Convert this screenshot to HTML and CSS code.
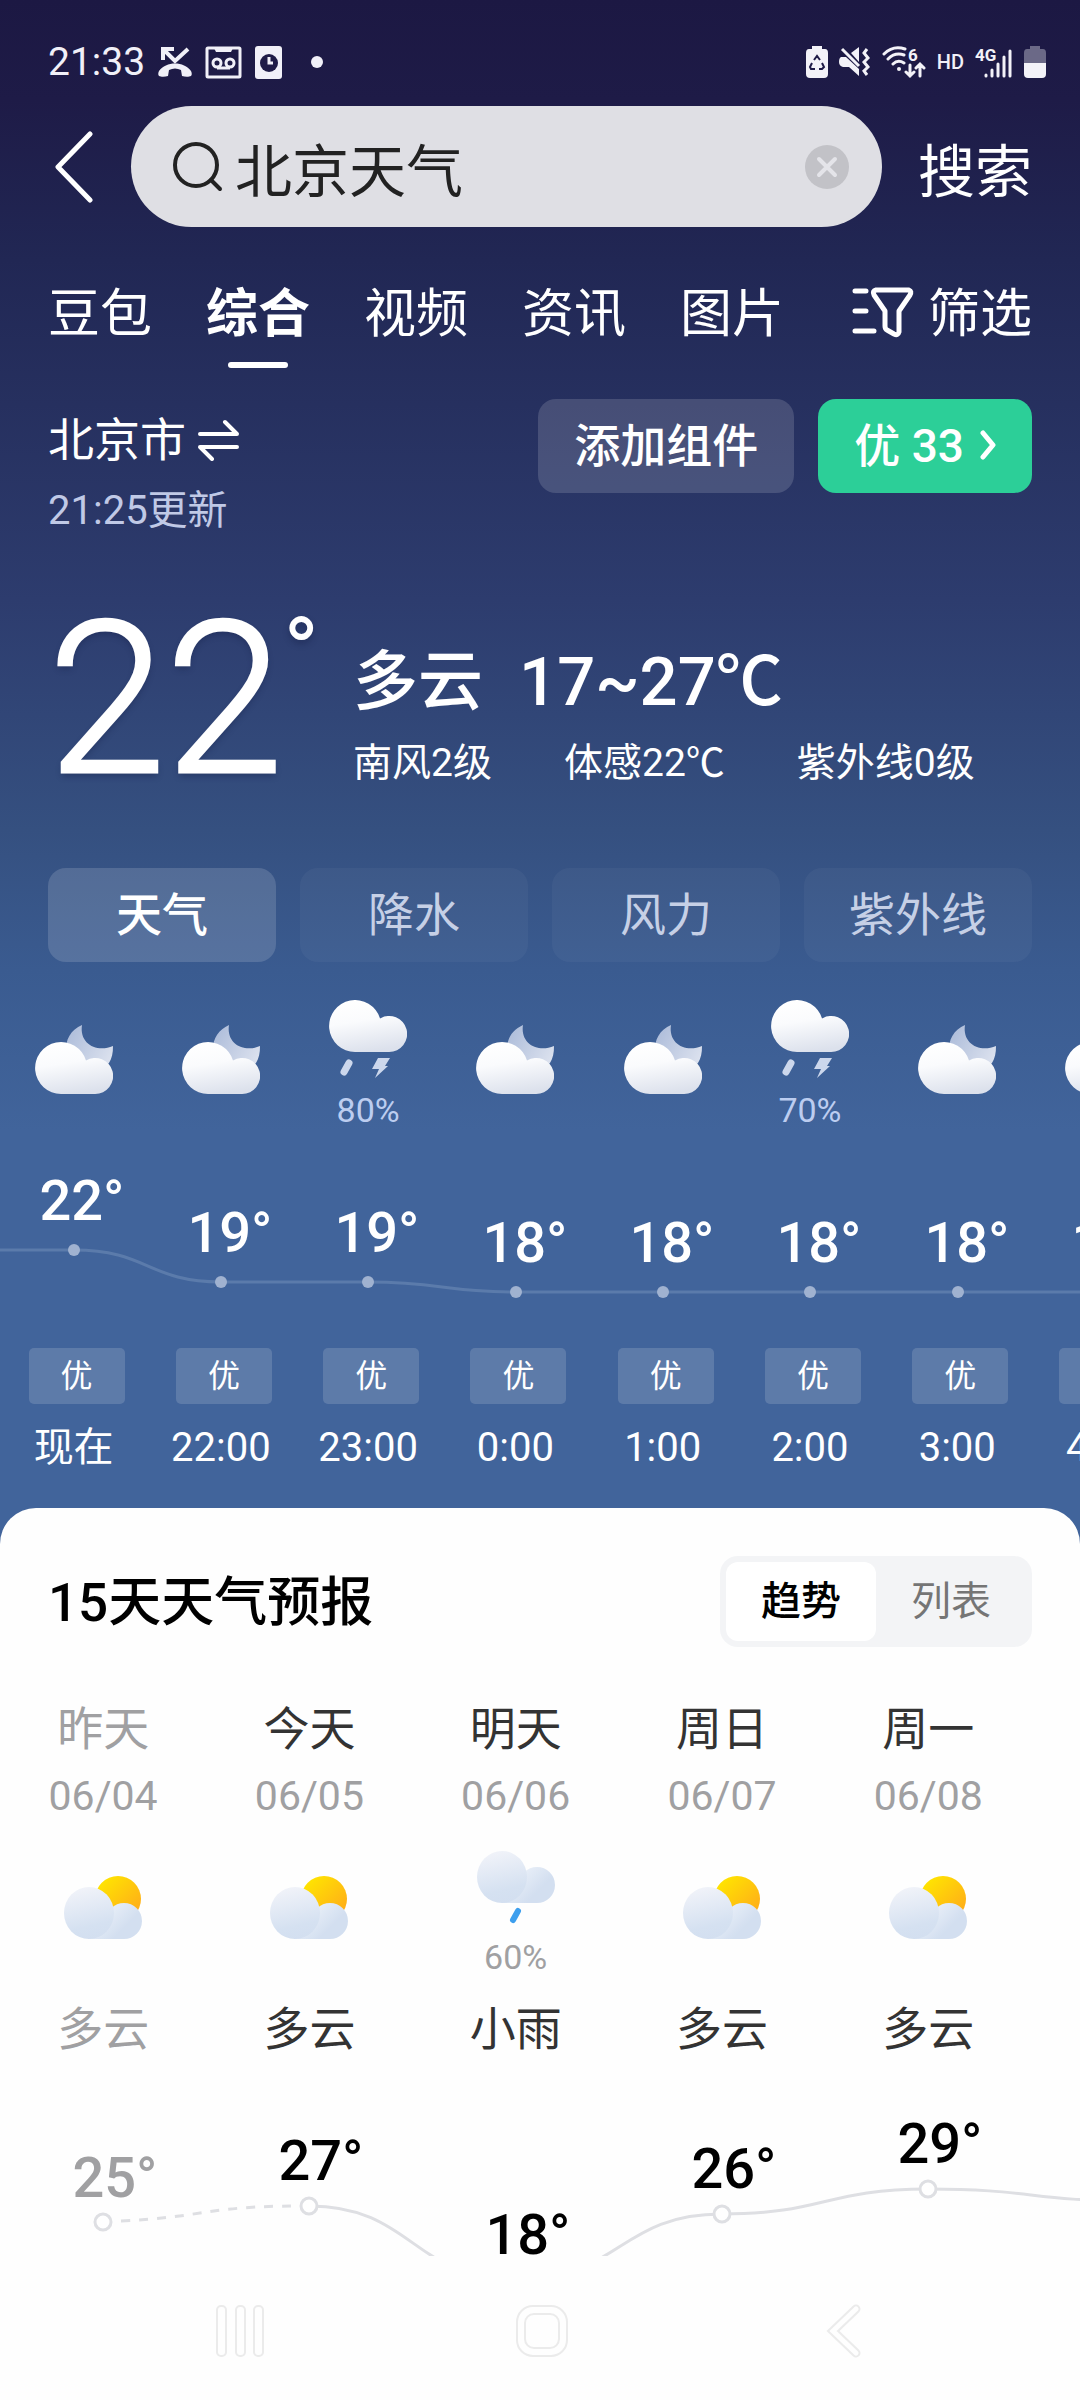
FILE: index.html
```html
<!DOCTYPE html>
<html lang="zh-CN">
<head>
<meta charset="UTF-8">
<meta name="viewport" content="width=device-width, initial-scale=1">
<title>北京天气</title>
<link rel="stylesheet" href="styles.css">
</head>
<body>

<!-- Shared weather icons -->
<svg class="sprite" width="0" height="0" aria-hidden="true">
  <defs>
    <linearGradient id="cloudNight" gradientUnits="userSpaceOnUse" x1="30" y1="17" x2="38" y2="69">
      <stop offset="0" stop-color="#ffffff"/>
      <stop offset="0.4" stop-color="#fafbfd"/>
      <stop offset="1" stop-color="#dce1ec"/>
    </linearGradient>
    <linearGradient id="moonFill" x1="0" y1="0" x2="1" y2="0.6">
      <stop offset="0" stop-color="#a9b9d8"/>
      <stop offset="1" stop-color="#dbe1ee"/>
    </linearGradient>
    <linearGradient id="sunFill" x1="0.1" y1="0.1" x2="0.9" y2="0.9">
      <stop offset="0" stop-color="#ffe600"/>
      <stop offset="1" stop-color="#ffaa1a"/>
    </linearGradient>
    <linearGradient id="cloudDay" gradientUnits="userSpaceOnUse" x1="18" y1="11" x2="30" y2="63">
      <stop offset="0" stop-color="#f1f3f9"/>
      <stop offset="0.75" stop-color="#d5e1f1"/>
      <stop offset="1" stop-color="#d3dff0"/>
    </linearGradient>
    <linearGradient id="puffDay" gradientUnits="userSpaceOnUse" x1="46" y1="34" x2="62" y2="50">
      <stop offset="0" stop-color="#e6edf7"/>
      <stop offset="1" stop-color="#d3dff0"/>
    </linearGradient>
    <symbol id="night" viewBox="0 0 78 77">
      <path fill="url(#moonFill)" d="M47 0C36 5 30 14 31 28L60 50L74 38C77 33 78 28 78 21C62 28 44 19 47 0z"/>
      <path fill="url(#cloudNight)" d="M26 69A26 26 0 1 1 51 35.5A18 18 0 1 1 60 69z"/>
    </symbol>
    <symbol id="storm" viewBox="0 17 78 78">
      <path fill="url(#cloudNight)" d="M26 69A26 26 0 1 1 51 35.5A18 18 0 1 1 60 69z"/>
      <path stroke="#ccd7ec" stroke-width="7" stroke-linecap="round" d="M20 80L15 89"/>
      <path fill="#ccd7ec" d="M49 75H61L56 83H59L46 95L50 86H43z"/>
    </symbol>
    <symbol id="cloudy" viewBox="0 0 78 71">
      <circle cx="54" cy="23" r="23" fill="url(#sunFill)"/>
      <path fill="url(#puffDay)" d="M24 63V45H42A18 18 0 1 1 60 63z"/>
      <ellipse cx="25" cy="37" rx="25" ry="26" fill="url(#cloudDay)"/>
    </symbol>
    <symbol id="rain" viewBox="0 11 78 74">
      <path fill="url(#puffDay)" d="M24 63V45H42A18 18 0 1 1 60 63z"/>
      <ellipse cx="25" cy="37" rx="25" ry="26" fill="url(#cloudDay)"/>
      <path stroke="#3d9fee" stroke-width="6" stroke-linecap="round" d="M41 71L36 80"/>
    </symbol>
  </defs>
</svg>

<div class="status-bar">
  <div class="status-left">
    <span class="clock">21:33</span>
    <svg width="34" height="32" viewBox="0 0 34 32" fill="none" stroke="#f1f0f8" stroke-width="4">
      <path d="M30 3L17 15L6 4M5 14V3H16"/>
      <path fill="#f1f0f8" stroke="none" d="M1 30C0 29 0 27 1 25C8 15 26 15 33 25C34 27 34 29 33 30C31 31 27 31 24 30L23 24C19 22 15 22 11 24L10 30C7 31 3 31 1 30z"/>
    </svg>
    <svg width="37" height="33" viewBox="0 0 37 33" fill="none" stroke="#f1f0f8" stroke-width="3">
      <rect x="2" y="2" width="33" height="29" rx="1"/>
      <path fill="#f1f0f8" stroke="none" d="M9 2H28L26 6H11z"/>
      <circle cx="12" cy="17" r="4"/>
      <circle cx="25" cy="17" r="4"/>
      <path d="M12 22H25"/>
    </svg>
    <svg width="27" height="33" viewBox="0 0 27 33">
      <rect width="27" height="33" rx="3" fill="#f1f0f8"/>
      <circle cx="14" cy="17" r="9" fill="#1f1b47"/>
      <path fill="none" stroke="#f1f0f8" stroke-width="3" d="M14 11V17H18"/>
    </svg>
    <span class="dot"></span>
  </div>
  <div class="status-right">
    <svg width="22" height="32" viewBox="0 0 22 32">
      <path fill="#f3f2f8" d="M6 0H16V3H19Q22 3 22 7V28Q22 32 18 32H4Q0 32 0 28V7Q0 3 3 3H6z"/>
      <path fill="none" stroke="#1f1b47" stroke-width="2" d="M8 14L11 10L14 14M16 17L18 21L16 23H13M9 23H5L4 21L6 17"/>
    </svg>
    <svg width="32" height="30" viewBox="0 0 32 30" fill="none" stroke="#f3f2f8">
      <path fill="#f3f2f8" stroke="none" d="M12 6L20 0V15zM2 10H7L20 22V29L10 20H4Q0 19 0 15Q0 11 2 10z"/>
      <path stroke-width="3" d="M3 2L20 19"/>
      <path stroke-width="3" d="M28 2L25 6L29 11L25 15L29 20L25 24L28 28"/>
    </svg>
    <svg width="44" height="34" viewBox="0 0 44 34" fill="none" stroke="#f3f2f8" stroke-width="3" stroke-linecap="round">
      <path d="M2 9Q11 0 23 4M6 14Q13 7 22 10M11 19Q16 14 22 18"/>
      <circle cx="17" cy="24" r="2" fill="#f3f2f8" stroke="none"/>
      <path d="M28 20V31M24 27L28 31L32 27M38 31V19M34 23L38 19L42 23"/>
      <text class="small-text" x="26" y="16">6</text>
    </svg>
    <span class="hd">HD</span>
    <svg width="38" height="34" viewBox="0 0 38 34" fill="none" stroke="#f3f2f8" stroke-width="4" stroke-linecap="round">
      <text class="small-text" x="0" y="16">4G</text>
      <path stroke-width="3" d="M11 30V31M17 25V31M23 19V31M29 12V31M35 6V31"/>
    </svg>
    <svg width="22" height="32" viewBox="0 0 22 32">
      <path fill="#6b6987" d="M6 0H16V3H19Q22 3 22 7V17H0V7Q0 3 3 3H6z"/>
      <path fill="#f3f2f8" d="M0 17H22V28Q22 32 18 32H4Q0 32 0 28z"/>
    </svg>
  </div>
</div>

<form class="search-row">
  <button type="button" class="back" aria-label="返回">
    <svg width="47" height="72" viewBox="0 0 47 72" fill="none" stroke="#fff" stroke-width="5" stroke-linecap="round" stroke-linejoin="round">
      <path d="M42 3L10 36L42 69"/>
    </svg>
  </button>
  <div class="search-box">
    <svg width="50" height="50" viewBox="0 0 50 50" fill="none" stroke="#222" stroke-width="4" stroke-linecap="round">
      <circle cx="23" cy="23" r="21"/>
      <path d="M38 38L47 47"/>
    </svg>
    <input type="text" aria-label="搜索内容" value="北京天气">
    <button type="reset" class="clear" aria-label="清除">
      <svg width="44" height="44" viewBox="0 0 44 44">
        <circle cx="22" cy="22" r="22" fill="#c2c2c7"/>
        <path stroke="#e4e4e9" stroke-width="4" stroke-linecap="round" d="M14 14L30 30M30 14L14 30"/>
      </svg>
    </button>
  </div>
  <button type="submit" class="search-btn">搜索</button>
</form>

<div class="tab-row">
  <nav class="tabs">
    <a href="#">豆包</a>
    <a href="#" class="active">综合</a>
    <a href="#">视频</a>
    <a href="#">资讯</a>
    <a href="#">图片</a>
  </nav>
  <button type="button" class="filter">
    <svg width="62" height="58" viewBox="0 0 62 58" fill="none" stroke="#fff" stroke-width="5" stroke-linecap="round" stroke-linejoin="round">
      <path d="M3 5H14M3 25H14M3 45H22"/>
      <path d="M24 4H57Q60 5 58 9L47 25V46Q46 50 42 48L35 44Q33 43 33 40V25L22 9Q20 5 24 4z"/>
    </svg>
    筛选
  </button>
</div>

<div class="location-row">
  <div class="place">
    <a href="#" class="city">北京市
      <svg width="42" height="42" viewBox="0 0 42 42" fill="none" stroke="#fff" stroke-width="4" stroke-linecap="round" stroke-linejoin="round">
        <path d="M2 15H39L27 3M39 28H2L14 40"/>
      </svg>
    </a>
    <p class="updated">21:25更新</p>
  </div>
  <button type="button" class="add">添加组件</button>
  <button type="button" class="aqi">优 33
    <svg width="16" height="38" viewBox="0 0 16 38" fill="none" stroke="#fff" stroke-width="5" stroke-linecap="round" stroke-linejoin="round">
      <path d="M3 10L13 22L3 34"/>
    </svg>
  </button>
</div>

<section class="now">
  <div class="now-temp">22<span class="degree">°</span></div>
  <div class="now-info">
    <p class="summary"><span>多云</span><span class="range">17~27℃</span></p>
    <p class="details"><span>南风2级</span><span>体感22℃</span><span>紫外线0级</span></p>
  </div>
</section>

<div class="modes">
  <button type="button" class="active">天气</button>
  <button type="button">降水</button>
  <button type="button">风力</button>
  <button type="button">紫外线</button>
</div>

<section class="hourly">
  <div class="hours">
    <div class="hour"><svg width="78" height="77"><use href="#night"/></svg></div>
    <div class="hour"><svg width="78" height="77"><use href="#night"/></svg></div>
    <div class="hour"><svg width="78" height="78"><use href="#storm"/></svg><span class="chance">80%</span></div>
    <div class="hour"><svg width="78" height="77"><use href="#night"/></svg></div>
    <div class="hour"><svg width="78" height="77"><use href="#night"/></svg></div>
    <div class="hour"><svg width="78" height="78"><use href="#storm"/></svg><span class="chance">70%</span></div>
    <div class="hour"><svg width="78" height="77"><use href="#night"/></svg></div>
    <div class="hour"><svg width="78" height="77"><use href="#night"/></svg></div>
  </div>

  <svg class="chart hour-chart" viewBox="0 0 1080 222">
    <path class="line" d="M0 124H74C148 124 148 156 221 156H368C442 156 442 166 516 166H1080"/>
    <g class="points">
      <circle cx="74" cy="124" r="6"/>
      <circle cx="221" cy="156" r="6"/>
      <circle cx="368" cy="156" r="6"/>
      <circle cx="516" cy="166" r="6"/>
      <circle cx="663" cy="166" r="6"/>
      <circle cx="810" cy="166" r="6"/>
      <circle cx="958" cy="166" r="6"/>
    </g>
    <g class="temps">
      <text x="82" y="94">22°</text>
      <text x="230" y="126">19°</text>
      <text x="377" y="126">19°</text>
      <text x="525" y="136">18°</text>
      <text x="672" y="136">18°</text>
      <text x="819" y="136">18°</text>
      <text x="967" y="136">18°</text>
      <text x="1114" y="136">18°</text>
    </g>
  </svg>

  <div class="hours">
    <div class="hour"><span class="badge">优</span><time>现在</time></div>
    <div class="hour"><span class="badge">优</span><time>22:00</time></div>
    <div class="hour"><span class="badge">优</span><time>23:00</time></div>
    <div class="hour"><span class="badge">优</span><time>0:00</time></div>
    <div class="hour"><span class="badge">优</span><time>1:00</time></div>
    <div class="hour"><span class="badge">优</span><time>2:00</time></div>
    <div class="hour"><span class="badge">优</span><time>3:00</time></div>
    <div class="hour"><span class="badge">优</span><time>4:00</time></div>
  </div>
</section>

<main class="sheet">
  <div class="sheet-header">
    <h2>15天天气预报</h2>
    <div class="toggle">
      <button type="button" class="active">趋势</button>
      <button type="button">列表</button>
    </div>
  </div>

  <div class="days">
    <div class="day past">
      <span class="name">昨天</span>
      <span class="date">06/04</span>
      <div class="day-icon"><svg width="78" height="71"><use href="#cloudy"/></svg></div>
      <span class="name">多云</span>
    </div>
    <div class="day">
      <span class="name">今天</span>
      <span class="date">06/05</span>
      <div class="day-icon"><svg width="78" height="71"><use href="#cloudy"/></svg></div>
      <span class="name">多云</span>
    </div>
    <div class="day">
      <span class="name">明天</span>
      <span class="date">06/06</span>
      <div class="day-icon"><svg width="78" height="74"><use href="#rain"/></svg><span class="chance">60%</span></div>
      <span class="name">小雨</span>
    </div>
    <div class="day">
      <span class="name">周日</span>
      <span class="date">06/07</span>
      <div class="day-icon"><svg width="78" height="71"><use href="#cloudy"/></svg></div>
      <span class="name">多云</span>
    </div>
    <div class="day">
      <span class="name">周一</span>
      <span class="date">06/08</span>
      <div class="day-icon"><svg width="78" height="71"><use href="#cloudy"/></svg></div>
      <span class="name">多云</span>
    </div>
  </div>

  <svg class="chart day-chart" viewBox="0 0 1080 193">
    <path class="line dashed" d="M121 158C206 154 206 143 300 143"/>
    <path class="line" d="M309 143C413 143 413 217 516 217C619 217 619 151 722 151C825 151 825 126 928 126C1031 126 1031 138 1134 138"/>
    <g class="points">
      <circle cx="103" cy="159" r="8"/>
      <circle cx="309" cy="143" r="8"/>
      <circle cx="722" cy="151" r="8"/>
      <circle cx="928" cy="126" r="8"/>
    </g>
    <g class="temps">
      <text class="past" x="115" y="134">25°</text>
      <text x="321" y="117">27°</text>
      <text x="528" y="191">18°</text>
      <text x="734" y="125">26°</text>
      <text x="940" y="100">29°</text>
    </g>
  </svg>
</main>

<div class="nav-bar">
  <button type="button" aria-label="最近任务">
    <svg width="52" height="54" viewBox="0 0 52 54" fill="none" stroke="#ebebeb" stroke-width="2">
      <rect x="3" y="2" width="9" height="50" rx="4"/>
      <rect x="22" y="2" width="9" height="50" rx="4"/>
      <rect x="40" y="2" width="9" height="50" rx="4"/>
    </svg>
  </button>
  <button type="button" aria-label="主屏幕">
    <svg width="52" height="54" viewBox="0 0 52 54" fill="none" stroke="#ebebeb" stroke-width="2">
      <rect x="1" y="2" width="50" height="50" rx="16"/>
      <rect x="9" y="10" width="34" height="34" rx="9"/>
    </svg>
  </button>
  <button type="button" aria-label="返回上一页">
    <svg width="52" height="54" viewBox="0 0 52 54" fill="none" stroke-linecap="round">
      <path stroke="#ebebeb" stroke-width="9" d="M38 5L15 27L38 49"/>
      <path stroke="#fefefe" stroke-width="5" d="M38 5L15 27L38 49"/>
    </svg>
  </button>
</div>

</body>
</html>
```

FILE: styles.css
```css
* {
  box-sizing: border-box;
}
body {
  margin: 0;
  font-family: Roboto, "Noto Sans CJK SC", sans-serif;
  color: white;
  background: #41649b linear-gradient(#1c1843 0, #1e1b47 100px, #212754 260px, #2d3c6e 600px, #355080 830px, #3a5b90 970px, #41649b 1130px) no-repeat;
  overflow-x: hidden;
}
p, h2 {
  margin: 0;
}
a {
  color: inherit;
  text-decoration: none;
}
button, input {
  font: inherit;
  color: inherit;
  background: none;
  border: none;
  padding: 0;
}
button {
  cursor: pointer;
}
svg {
  display: block;
  flex-shrink: 0;
}
.sprite {
  position: absolute;
}

/* Status bar */
.status-bar {
  display: flex;
  justify-content: space-between;
  align-items: center;
  height: 106px;
  padding: 18px 34px 0 48px;
  color: #f1f0f8;
}
.status-left, .status-right {
  display: flex;
  align-items: center;
}
.status-left {
  gap: 13px;
}
.status-right {
  gap: 11px;
}
.clock {
  font-size: 39px;
}
.dot {
  width: 12px;
  height: 12px;
  margin-left: 16px;
  border-radius: 50%;
  background: #f1f0f8;
}
.hd {
  font-size: 20px;
  font-weight: 500;
}
.small-text {
  fill: #f3f2f8;
  stroke: none;
  font-size: 17px;
  font-weight: 700;
}

/* Search */
.search-row {
  display: flex;
  align-items: center;
  gap: 36px;
  padding: 0 48px;
}
.search-box {
  flex: 1;
  display: flex;
  align-items: center;
  gap: 12px;
  min-width: 0;
  height: 121px;
  padding: 0 33px 0 42px;
  border-radius: 61px;
  background: #dfdfe4;
}
.search-box input {
  flex: 1;
  min-width: 0;
  padding-top: 12px;
  font-size: 57px;
  line-height: 80px;
  color: #222;
  outline: none;
}
.search-btn {
  padding-top: 12px;
  font-size: 57px;
  line-height: 80px;
}

/* Tabs */
.tab-row {
  display: flex;
  justify-content: space-between;
  align-items: flex-start;
  padding: 52px 48px 0;
  font-size: 52px;
  line-height: 72px;
}
.tabs {
  display: flex;
  gap: 54px;
}
.tabs a {
  padding-bottom: 17px;
}
.tabs .active {
  font-weight: 700;
  padding-bottom: 0;
}
.tabs .active::after {
  content: "";
  display: block;
  width: 60px;
  height: 6px;
  margin: 11px auto 0;
  border-radius: 3px;
  background: white;
}
.filter {
  display: flex;
  align-items: center;
  gap: 14px;
}

/* Location */
.location-row {
  display: flex;
  align-items: flex-start;
  gap: 24px;
  padding: 31px 48px 0;
}
.place {
  flex: 1;
  padding-top: 8px;
}
.city {
  display: flex;
  align-items: center;
  gap: 12px;
  font-size: 46px;
  line-height: 66px;
}
.updated {
  margin-top: 10px;
  font-size: 40px;
  line-height: 56px;
  color: #c0c9e6;
}
.add, .aqi {
  height: 94px;
  padding: 0 36px 8px;
  border-radius: 18px;
  font-size: 46px;
  font-weight: 500;
}
.add {
  background: rgba(255, 255, 255, 0.15);
}
.aqi {
  display: flex;
  align-items: center;
  gap: 16px;
  background: #2ccf98;
}

/* Current weather */
.now {
  display: flex;
  align-items: flex-start;
  gap: 34px;
  padding: 61px 48px 0;
}
.now-temp {
  display: flex;
  align-items: flex-start;
  font-size: 212px;
  font-weight: 300;
  line-height: 200px;
  -webkit-text-stroke: 3px white;
  text-shadow: 0 4px 6px rgba(20, 30, 70, 0.4);
}
.degree {
  padding-top: 12px;
  font-size: 96px;
  font-weight: 400;
  line-height: 80px;
  -webkit-text-stroke: 0;
}
.now-info {
  padding-top: 42px;
}
.summary {
  display: flex;
  gap: 36px;
  font-size: 65px;
  font-weight: 500;
  line-height: 80px;
}
.range {
  font-size: 67px;
}
.details {
  display: flex;
  gap: 72px;
  margin-top: 11px;
  font-size: 39px;
  line-height: 60px;
}

/* Mode buttons */
.modes {
  display: grid;
  grid-template-columns: repeat(4, 1fr);
  gap: 24px;
  padding: 68px 48px 38px;
}
.modes button {
  height: 94px;
  padding-bottom: 8px;
  border-radius: 18px;
  font-size: 46px;
  color: #c6d0e6;
  background: rgba(255, 255, 255, 0.04);
}
.modes .active {
  font-weight: 500;
  color: white;
  background: rgba(255, 255, 255, 0.15);
}

/* Hourly forecast */
.hourly {
  overflow: hidden;
  padding-bottom: 32px;
}
.hours {
  display: flex;
}
.hour {
  flex: 0 0 calc(100% * 3 / 22);
  display: flex;
  flex-direction: column;
  align-items: center;
  justify-content: center;
}
.chance {
  margin-top: 16px;
  font-size: 34px;
  line-height: 32px;
  color: #bccdf0;
}
.chart {
  width: 100%;
}
.line {
  fill: none;
  stroke-width: 3;
}
.temps {
  font-size: 56px;
  font-weight: 500;
  text-anchor: middle;
}
.hour-chart .line {
  stroke: #5b7bab;
}
.hour-chart .points {
  fill: #a0b2d0;
}
.hour-chart .temps {
  fill: white;
}
.badge {
  width: 96px;
  margin-left: 6px;
  border-radius: 5px;
  font-size: 32px;
  line-height: 56px;
  text-align: center;
  background: rgba(255, 255, 255, 0.15);
}
.hour time {
  margin-top: 16px;
  font-size: 40px;
  line-height: 56px;
}

/* 15 day forecast */
.sheet {
  padding-top: 48px;
  border-radius: 36px 36px 0 0;
  color: #333;
  background: #fefefe;
  overflow: hidden;
}
.sheet-header {
  display: flex;
  justify-content: space-between;
  align-items: center;
  padding: 0 48px 50px;
}
.sheet-header h2 {
  padding-bottom: 8px;
  font-size: 53px;
  font-weight: 500;
  color: black;
}
.toggle {
  display: flex;
  padding: 6px;
  border-radius: 18px;
  background: #f3f4f6;
}
.toggle button {
  width: 150px;
  height: 79px;
  padding-bottom: 8px;
  border-radius: 12px;
  font-size: 40px;
  color: #757575;
}
.toggle .active {
  font-weight: 500;
  color: black;
  background: white;
}
.days {
  display: flex;
  padding-bottom: 2px;
}
.day {
  flex: 0 0 19.1%;
  display: flex;
  flex-direction: column;
  align-items: center;
}
.name {
  font-size: 46px;
  line-height: 64px;
}
.date {
  margin-top: 7px;
  font-size: 41px;
  line-height: 56px;
  color: #a0a0a2;
}
.day-icon {
  display: flex;
  flex-direction: column;
  align-items: center;
  justify-content: center;
  height: 123px;
  margin: 26px 0 24px;
}
.day .chance {
  color: #a0a0a2;
}
.past .name {
  color: #a0a0a2;
}
.day-chart .line {
  stroke: #dedfe3;
}
.day-chart .dashed {
  stroke-dasharray: 9 9;
}
.day-chart .points {
  fill: white;
  stroke: #dedfe3;
  stroke-width: 3;
}
.day-chart .temps {
  fill: black;
}
.day-chart .past {
  fill: #a0a0a2;
}

/* System navigation */
.nav-bar {
  display: flex;
  justify-content: center;
  gap: 250px;
  padding: 48px 0 42px 4px;
  background: #fefefe;
}
```
